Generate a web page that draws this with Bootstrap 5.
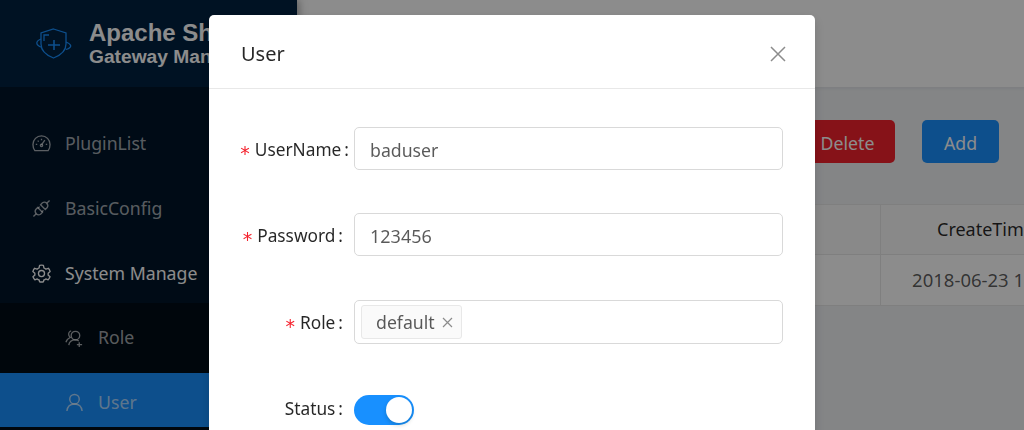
<!DOCTYPE html>
<html lang="en">
<head>
<meta charset="utf-8">
<title>User</title>
<link href="https://cdn.jsdelivr.net/npm/bootstrap@5.3.0/dist/css/bootstrap.min.css" rel="stylesheet">
<style>
html,body{height:430px;overflow:hidden}
body{font-family:"Noto Sans","Open Sans",sans-serif;font-size:17.7px;background:#f0f2f5;color:rgba(0,0,0,.65)}
.app-shell{width:1400px;height:430px}
.side-nav{width:297px;flex:none;background:#001529;color:rgba(255,255,255,.65);box-shadow:2px 0 8px rgba(0,0,0,.35);z-index:2}
.brand-area{height:87px;flex:none;background:#002140;padding-left:34px;font-family:"Liberation Sans",sans-serif;font-weight:700;color:#fff;white-space:nowrap}
.brand-main{font-size:24px;line-height:26px}
.brand-sub{font-size:19.200px;line-height:22px}
.brand-logo{width:40px;height:34px;margin-right:15px;flex:none}
.menu-stack{padding-top:28px;flex:none}
.menu-row{height:54px;margin-bottom:11px;padding:2px 0 0 32px;gap:14px;white-space:nowrap}
.menu-row svg{width:19px;height:19px;flex:none}
.menu-row.is-open{color:#fff}
.sub-stack{background:#000c17;padding-top:6px;height:130px;margin-top:-7px}
.sub-row{height:54px;margin-bottom:10px;padding:2px 0 0 65px;gap:14px}
.sub-row svg{width:19px;height:19px;flex:none}
.sub-row.is-current{background:#1890ff;padding-top:4px}
.top-strip{height:87px;background:#fff;box-shadow:0 1px 4px rgba(0,21,41,.08)}
.work-area{flex:1}
.tool-row{padding:33px 0 0 0;margin-left:486px;gap:27px;height:117px}
.act-btn{height:43px;font-size:17.700px;border-radius:5px;border:0;color:#fff;line-height:43px;text-align:center}
.act-del{width:112px;background:#f5222d;padding:2px 3px 0 20px}
.act-add{width:77px;background:#1890ff;padding:2px 0 0}
.grid-table{width:1070px;margin-left:32px;background:#fff;border-collapse:collapse;table-layout:fixed;text-align:center}
.grid-table th,.grid-table td{border:1px solid #e8e8e8;font-weight:400;padding:0;white-space:nowrap}
.grid-table th{height:50px;background:#fafafa;color:rgba(0,0,0,.85)}
.grid-table td{height:51px;font-size:18.500px;padding-left:4px;color:rgba(0,0,0,.65)}
.grid-table th.sort-col{padding-right:24px;font-size:18px}
.page-mask{position:fixed;inset:0;background:rgba(0,0,0,.45);z-index:10}
.dlg-wrap{position:fixed;top:15px;left:209px;width:606px;z-index:11}
.dlg-box{border:0;border-radius:5px;background:#fff;height:600px;box-shadow:0 4px 12px rgba(0,0,0,.15)}
.dlg-head{height:74px;padding:4px 29px 0 32px;border-bottom:1px solid #e8e8e8}
.dlg-title{font-size:20px;color:rgba(0,0,0,.85);line-height:1}
.dlg-close{width:16px;height:16px;display:block}
.dlg-body{padding:38px 32px 0 0}
.field-row{margin-bottom:43px}
.field-row-next{margin-bottom:44px}
.field-row-last{margin-bottom:51px}
.field-label{width:134px;height:43px;margin:0 11px 0 0;flex:none;font-size:17.300px;text-align:right;color:rgba(0,0,0,.85);white-space:nowrap;line-height:46px}
.field-label i{font-style:normal;color:#f5222d;font-family:"DejaVu Sans",sans-serif;font-size:19px;line-height:1;margin-right:5px;vertical-align:-4px}
.field-label b{font-weight:400;margin-left:3px}
.field-wide{width:140px;margin-right:5px}
.field-role{line-height:45px}
.field-status{height:30px;line-height:28px}
.field-input{height:43px;border:1px solid #d9d9d9;border-radius:5px;font-size:17.700px;color:rgba(0,0,0,.65);padding:2px 15px 0;width:429px;box-shadow:none;font-family:inherit}
.field-num{font-size:18px}
.tag-box{height:44px;width:429px;border:1px solid #d9d9d9;border-radius:5px;padding:4px 6px}
.tag-chip{height:34px;background:#fafafa;border:1px solid #e8e8e8;border-radius:3px;padding:1px 8px 0 14px;gap:7px;color:rgba(0,0,0,.65);line-height:1}
.tag-chip svg{width:11px;height:11px}
.toggle-pill{width:60px;height:30px;border-radius:15px;background:#1890ff;padding:2px}
.toggle-dot{width:26px;height:26px;border-radius:50%;background:#fff;box-shadow:0 2px 4px rgba(0,35,11,.2)}
</style>
</head>
<body>
<div class="app-shell d-flex">
  <aside class="side-nav d-flex flex-column">
    <div class="brand-area d-flex align-items-center">
      <svg class="brand-logo" viewBox="0 0 40 34" fill="none" stroke="#1890ff" stroke-width="1.300">
        <path d="M19.500 2 L32 6 V17 C32 24 26 28.500 19.500 31 C13 28.500 7 24 7 17 V6 Z"/>
        <path d="M7 12 C2 14 0.500 18 8 20.500 M32 15 C37 17 39.500 20 32 22.500"/>
        <path d="M10 14 V8 H15"/>
        <path d="M20 13 V23 M14 18 H26" stroke-width="1.600"/>
      </svg>
      <div class="brand-text">
        <div class="brand-main">Apache ShenYu</div>
        <div class="brand-sub">Gateway Management</div>
      </div>
    </div>
    <nav class="menu-stack">
      <div class="menu-row d-flex align-items-center">
        <svg viewBox="0 0 20 20" fill="none" stroke="currentColor" stroke-width="1.400"><path d="M3 17.500 C1.500 15.500 1 13.500 1 11 A9 9 0 0 1 19 11 C19 13.500 18.500 15.500 17 17.500 Z" stroke-linejoin="round"/><path d="M10 11.500 L13.500 6.500 M4 11 H5.500 M14.500 11 H16 M10 5 V6.500 M6 7 L7 8"/><circle cx="10" cy="12" r="1.200"/></svg>
        <span>PluginList</span>
      </div>
      <div class="menu-row d-flex align-items-center">
        <svg viewBox="0 0 20 20" fill="none" stroke="currentColor" stroke-width="1.400"><path d="M6 9 L11 14 L9 16 C7.500 17 5.500 16.500 4.500 15.500 C3.500 14.500 3 12.500 4 11 Z"/><path d="M9 6 L14 11 L16 9 C17 7.500 16.500 5.500 15.500 4.500 C14.500 3.500 12.500 3 11 4 Z"/><path d="M1.500 18.500 L4.500 15.500 M15.500 4.500 L18.500 1.500 M6 10 L8 8 M10 14 L12 12"/></svg>
        <span>BasicConfig</span>
      </div>
      <div class="menu-row is-open d-flex align-items-center">
        <svg viewBox="0 0 20 20" fill="none" stroke="currentColor" stroke-width="1.400" stroke-linejoin="round"><path d="M8 1.500 C9.300 1.200 10.700 1.200 12 1.500 L12.600 4.200 C13.300 4.500 14 4.900 14.600 5.400 L17.200 4.500 C18.100 5.500 18.700 6.700 19.100 8 L17 9.800 C17.100 10.600 17 11 16.900 11.600 L19 13.500 C18.500 14.800 17.900 15.800 17 16.700 L14.500 15.700 C13.900 16.200 13.300 16.500 12.500 16.800 L12 18.700 C10.700 19 9.300 19 8 18.700 L7.500 16.800 C6.700 16.500 6.100 16.200 5.500 15.700 L3 16.700 C2.100 15.800 1.500 14.800 1 13.500 L3.100 11.600 C3 11 2.900 10.600 3 9.800 L0.900 8 C1.300 6.700 1.900 5.500 2.800 4.500 L5.400 5.400 C6 4.900 6.700 4.500 7.400 4.200 Z"/><circle cx="10" cy="10" r="3.200"/></svg>
        <span>System Manage</span>
      </div>
      <div class="sub-stack">
        <div class="sub-row d-flex align-items-center">
          <svg viewBox="0 0 20 20" fill="none" stroke="currentColor" stroke-width="1.400"><circle cx="11" cy="8" r="4.500"/><path d="M4 18 C4.500 14 7 12.500 11 12.500 C12.500 12.500 13.500 13 14.500 13.500 M15 15 V20 M12.500 17.500 H18"/><path d="M6.500 3 C4.500 3.500 3.500 5.500 4 7.500 C4.200 8.500 5 9.500 5.500 10 C3 11 1.500 13 1 15"/></svg>
          <span>Role</span>
        </div>
        <div class="sub-row is-current d-flex align-items-center">
          <svg viewBox="0 0 20 20" fill="none" stroke="currentColor" stroke-width="1.500"><circle cx="10" cy="6.500" r="5"/><path d="M2 19 C2.500 14 5.500 11.500 10 11.500 C14.500 11.500 17.500 14 18 19"/></svg>
          <span>User</span>
        </div>
      </div>
    </nav>
  </aside>
  <main class="work-area">
    <div class="top-strip"></div>
    <div class="tool-row d-flex">
      <button class="act-btn act-del" type="button">Delete</button>
      <button class="act-btn act-add" type="button">Add</button>
    </div>
    <table class="grid-table">
      <colgroup><col style="width:551px"><col style="width:234px"><col></colgroup>
      <tr><th>UserName</th><th class="sort-col">CreateTime</th><th>UpdateTime</th></tr>
      <tr><td>baduser</td><td>2018-06-23 12:00:00</td><td>2018-06-23 12:00:00</td></tr>
    </table>
  </main>
</div>
<div class="page-mask"></div>
<div class="dlg-wrap">
  <div class="modal-content dlg-box">
    <div class="modal-header dlg-head">
      <div class="dlg-title">User</div>
      <svg class="dlg-close ms-auto" viewBox="0 0 16 16" fill="none" stroke="#8c8c8c" stroke-width="1.500"><path d="M1 1 L15 15 M15 1 L1 15"/></svg>
    </div>
    <div class="dlg-body">
      <div class="field-row d-flex">
        <label class="field-label field-wide"><i>*</i>UserName<b>:</b></label>
        <input class="form-control field-input" value="baduser">
      </div>
      <div class="field-row-next d-flex">
        <label class="field-label"><i>*</i>Password<b>:</b></label>
        <input class="form-control field-input field-num" value="123456">
      </div>
      <div class="field-row-last d-flex">
        <label class="field-label field-role"><i>*</i>Role<b>:</b></label>
        <div class="tag-box d-flex">
          <span class="tag-chip d-inline-flex align-items-center">default
            <svg viewBox="0 0 11 11" fill="none" stroke="#8c8c8c" stroke-width="1.200"><path d="M1 1 L10 10 M10 1 L1 10"/></svg>
          </span>
        </div>
      </div>
      <div class="d-flex align-items-center">
        <label class="field-label field-status">Status<b>:</b></label>
        <div class="toggle-pill d-flex justify-content-end"><div class="toggle-dot"></div></div>
      </div>
    </div>
  </div>
</div>
<script src="https://cdn.jsdelivr.net/npm/bootstrap@5.3.0/dist/js/bootstrap.bundle.min.js"></script>
</body>
</html>
